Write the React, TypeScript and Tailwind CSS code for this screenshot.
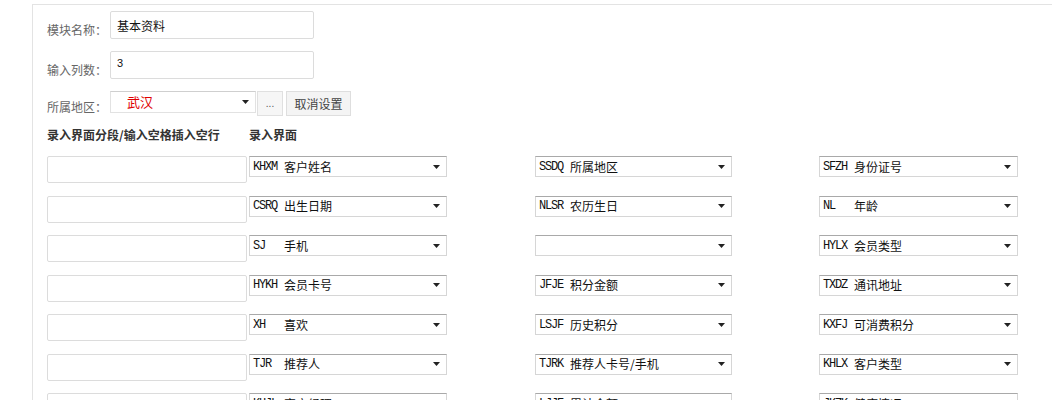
import React from "react";

const cjk = "font-['Noto_Sans_CJK_SC','Noto_Sans',sans-serif]";

type Field = { code: string; name: string } | null;

const rows: Field[][] = [
  [{ code: "KHXM", name: "客户姓名" }, { code: "SSDQ", name: "所属地区" }, { code: "SFZH", name: "身份证号" }],
  [{ code: "CSRQ", name: "出生日期" }, { code: "NLSR", name: "农历生日" }, { code: "NL", name: "年龄" }],
  [{ code: "SJ", name: "手机" }, null, { code: "HYLX", name: "会员类型" }],
  [{ code: "HYKH", name: "会员卡号" }, { code: "JFJE", name: "积分金额" }, { code: "TXDZ", name: "通讯地址" }],
  [{ code: "XH", name: "喜欢" }, { code: "LSJF", name: "历史积分" }, { code: "KXFJ", name: "可消费积分" }],
  [{ code: "TJR", name: "推荐人" }, { code: "TJRK", name: "推荐人卡号/手机" }, { code: "KHLX", name: "客户类型" }],
  [{ code: "KHJL", name: "客户经理" }, { code: "LJJE", name: "累计金额" }, { code: "JKZK", name: "健康情况" }],
];

const Arrow = () => (
  <svg width="7" height="4" viewBox="0 0 7 4" className="shrink-0">
    <polygon points="0,0 7,0 3.5,4" fill="#222" />
  </svg>
);

const FieldSelect = ({ field, width }: { field: Field; width: string }) => (
  <div
    className={`${width} h-[21px] flex items-center justify-between border border-[#d6d6d6] border-t-[#a9a9a9] bg-white pl-[3px] pr-[6px]`}
  >
    <div className="flex items-center text-[12px] text-[#111] leading-none">
      {field && (
        <>
          <span className="w-[31px] font-['Liberation_Mono',monospace] text-[12px] tracking-[-1.2px]">
            {field.code}
          </span>
          <span className={cjk}>{field.name}</span>
        </>
      )}
    </div>
    <Arrow />
  </div>
);

const App = () => {
  return (
    <div className="w-[1058px] h-[400px] overflow-hidden bg-white pt-[4px] pl-[32px] pr-[6px]">
      <div className="border-l border-t border-[#e3e3e3] h-full pl-[14px] pt-[6px]">
        {/* Top form */}
        <div className="flex items-end">
          <div className={`w-[63px] text-[12px] text-[#666] ${cjk}`}>模块名称：</div>
          <div className={`w-[204px] h-[28px] border border-[#dcdcdc] rounded-[2px] px-[6px] pt-[5px] text-[12px] text-[#111] ${cjk}`}>
            基本资料
          </div>
        </div>
        <div className="flex items-end mt-[12px]">
          <div className={`w-[63px] text-[12px] text-[#666] ${cjk}`}>输入列数：</div>
          <div className="w-[204px] h-[28px] border border-[#dcdcdc] rounded-[2px] px-[6px] pt-[3px] text-[11px] text-[#111] font-['Liberation_Sans',sans-serif]">
            3
          </div>
        </div>
        <div className="flex items-end mt-[12px]">
          <div className={`w-[63px] text-[12px] text-[#666] ${cjk}`}>所属地区：</div>
          <div className="flex items-start">
            <div className="w-[146px] h-[22px] flex items-center justify-between border border-[#e2e2e2] border-t-[#cfcfcf] bg-white pl-[16px] pr-[6px]">
              <span className={`text-[13px] text-[#e00000] ${cjk}`}>武汉</span>
              <Arrow />
            </div>
            <div className="w-[26px] h-[25px] ml-[1px] flex items-center justify-center bg-[#f6f6f6] border border-[#e0e0e0] text-[10px] text-[#555] font-['Liberation_Sans',sans-serif]">
              ...
            </div>
            <div className={`w-[65px] h-[25px] ml-[3px] flex items-center justify-center bg-[#f4f4f4] border border-[#dedede] text-[12px] text-[#444] ${cjk}`}>
              取消设置
            </div>
          </div>
        </div>

        {/* Header */}
        <div className={`flex items-center h-[20px] mt-[9px] text-[12px] font-bold text-[#333] ${cjk}`}>
          <div className="w-[202px]">录入界面分段/输入空格插入空行</div>
          <div>录入界面</div>
        </div>

        {/* Field rows */}
        <div className="mt-[11px]">
          {rows.map((r, i) => (
            <div key={i} className="flex items-start h-[39.5px]">
              <div className="w-[200px] h-[27px] border border-[#dcdcdc] rounded-[2px] bg-white" />
              <div className="ml-[2px] w-[286px]">
                <FieldSelect field={r[0]} width="w-[198px]" />
              </div>
              <div className="w-[284px]">
                <FieldSelect field={r[1]} width="w-[197px]" />
              </div>
              <div>
                <FieldSelect field={r[2]} width="w-[199px]" />
              </div>
            </div>
          ))}
        </div>
      </div>
    </div>
  );
};

export default App;
